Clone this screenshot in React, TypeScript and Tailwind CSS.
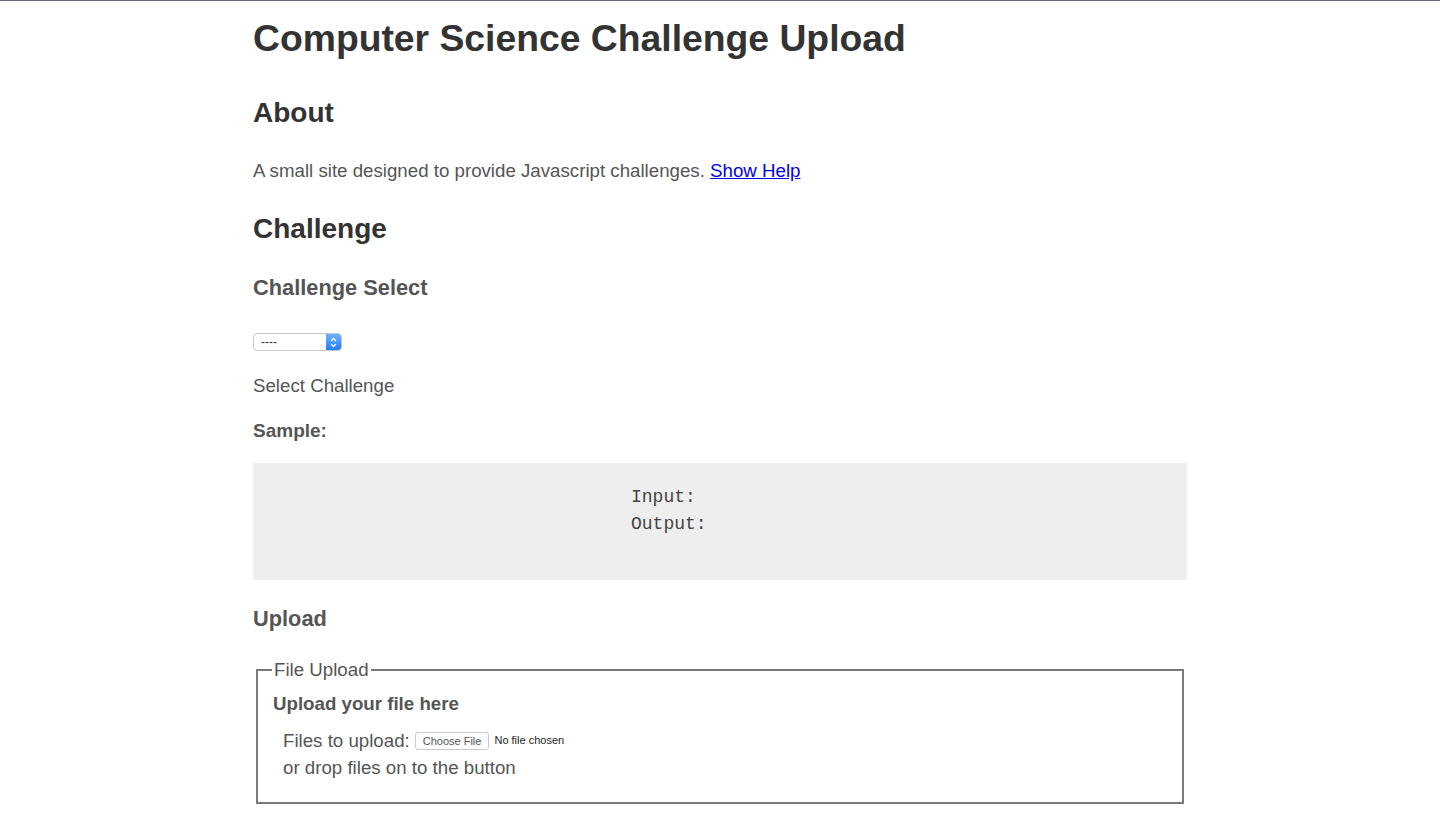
import React from "react";

const App = () => {
  return (
    <div className="min-h-screen w-full bg-white border-t border-[#5f6b7a] font-['Liberation_Sans',Arial,sans-serif] text-[#555]">
      <div className="mx-auto w-[934px]">
        <h1 className="pt-[13px] text-[37.3px] font-bold leading-[48px] text-[#333]">
          Computer Science Challenge Upload
        </h1>
        <h2 className="mt-[34px] text-[28px] font-bold leading-[34px] text-[#333]">About</h2>
        <p className="mt-[28px] text-[18.7px] leading-[26px]">
          A small site designed to provide Javascript challenges.{" "}
          <a href="#" className="text-[#0000ee] underline">
            Show Help
          </a>
        </p>
        <h2 className="mt-[28px] text-[28px] font-bold leading-[34px] text-[#333]">Challenge</h2>
        <h3 className="mt-[28px] text-[21.8px] font-bold leading-[28px]">Challenge Select</h3>
        <div className="mt-[31px] flex h-[18px] w-[89px] items-center overflow-hidden rounded-[4px] border border-[#c8c8c8] bg-white">
          <span className="flex-1 pl-[7px] text-[12px] leading-none text-[#333]">----</span>
          <span className="flex h-full w-[15px] items-center justify-center bg-gradient-to-b from-[#6cb3fa] to-[#1e7cf7]">
            <svg width="7" height="11" viewBox="0 0 7 11" fill="none" stroke="white" strokeWidth="1.3">
              <path d="M1 4 L3.5 1.5 L6 4" />
              <path d="M1 7 L3.5 9.5 L6 7" />
            </svg>
          </span>
        </div>
        <p className="mt-[22px] text-[18.7px] leading-[26px]">Select Challenge</p>
        <p className="mt-[19px] text-[19px] font-bold leading-[26px]">Sample:</p>
        <div className="mt-[19px] h-[117px] bg-[#eeeeee] pt-[21px] pl-[378px] font-['Liberation_Mono','Courier_New',monospace] text-[18px] leading-[27px] text-[#444]">
          <div>Input:</div>
          <div>Output:</div>
        </div>
        <h3 className="mt-[25px] text-[21.8px] font-bold leading-[28px]">Upload</h3>
        <fieldset className="mx-[3px] mt-[26px] h-[145px] border-2 border-[#7a7a7a] px-[14px] pb-3">
          <legend className="px-[2px] text-[18.7px] leading-[22px]">File Upload</legend>
          <p className="mt-[11px] pl-[1px] text-[18.7px] font-bold leading-[24px]">Upload your file here</p>
          <div className="mt-[11px] pl-[11px] text-[18.7px] leading-[27px]">
            <div className="flex items-center">
              <span>Files to upload:</span>
              <span className="ml-[5px] rounded-[3px] border border-[#c9c9c9] bg-white px-[7px] py-[1px] text-[11px] leading-[14px] text-[#555]">
                Choose File
              </span>
              <span className="ml-[5px] text-[11px] text-[#222]">No file chosen</span>
            </div>
            <div>or drop files on to the button</div>
          </div>
        </fieldset>
      </div>
    </div>
  );
};

export default App;
